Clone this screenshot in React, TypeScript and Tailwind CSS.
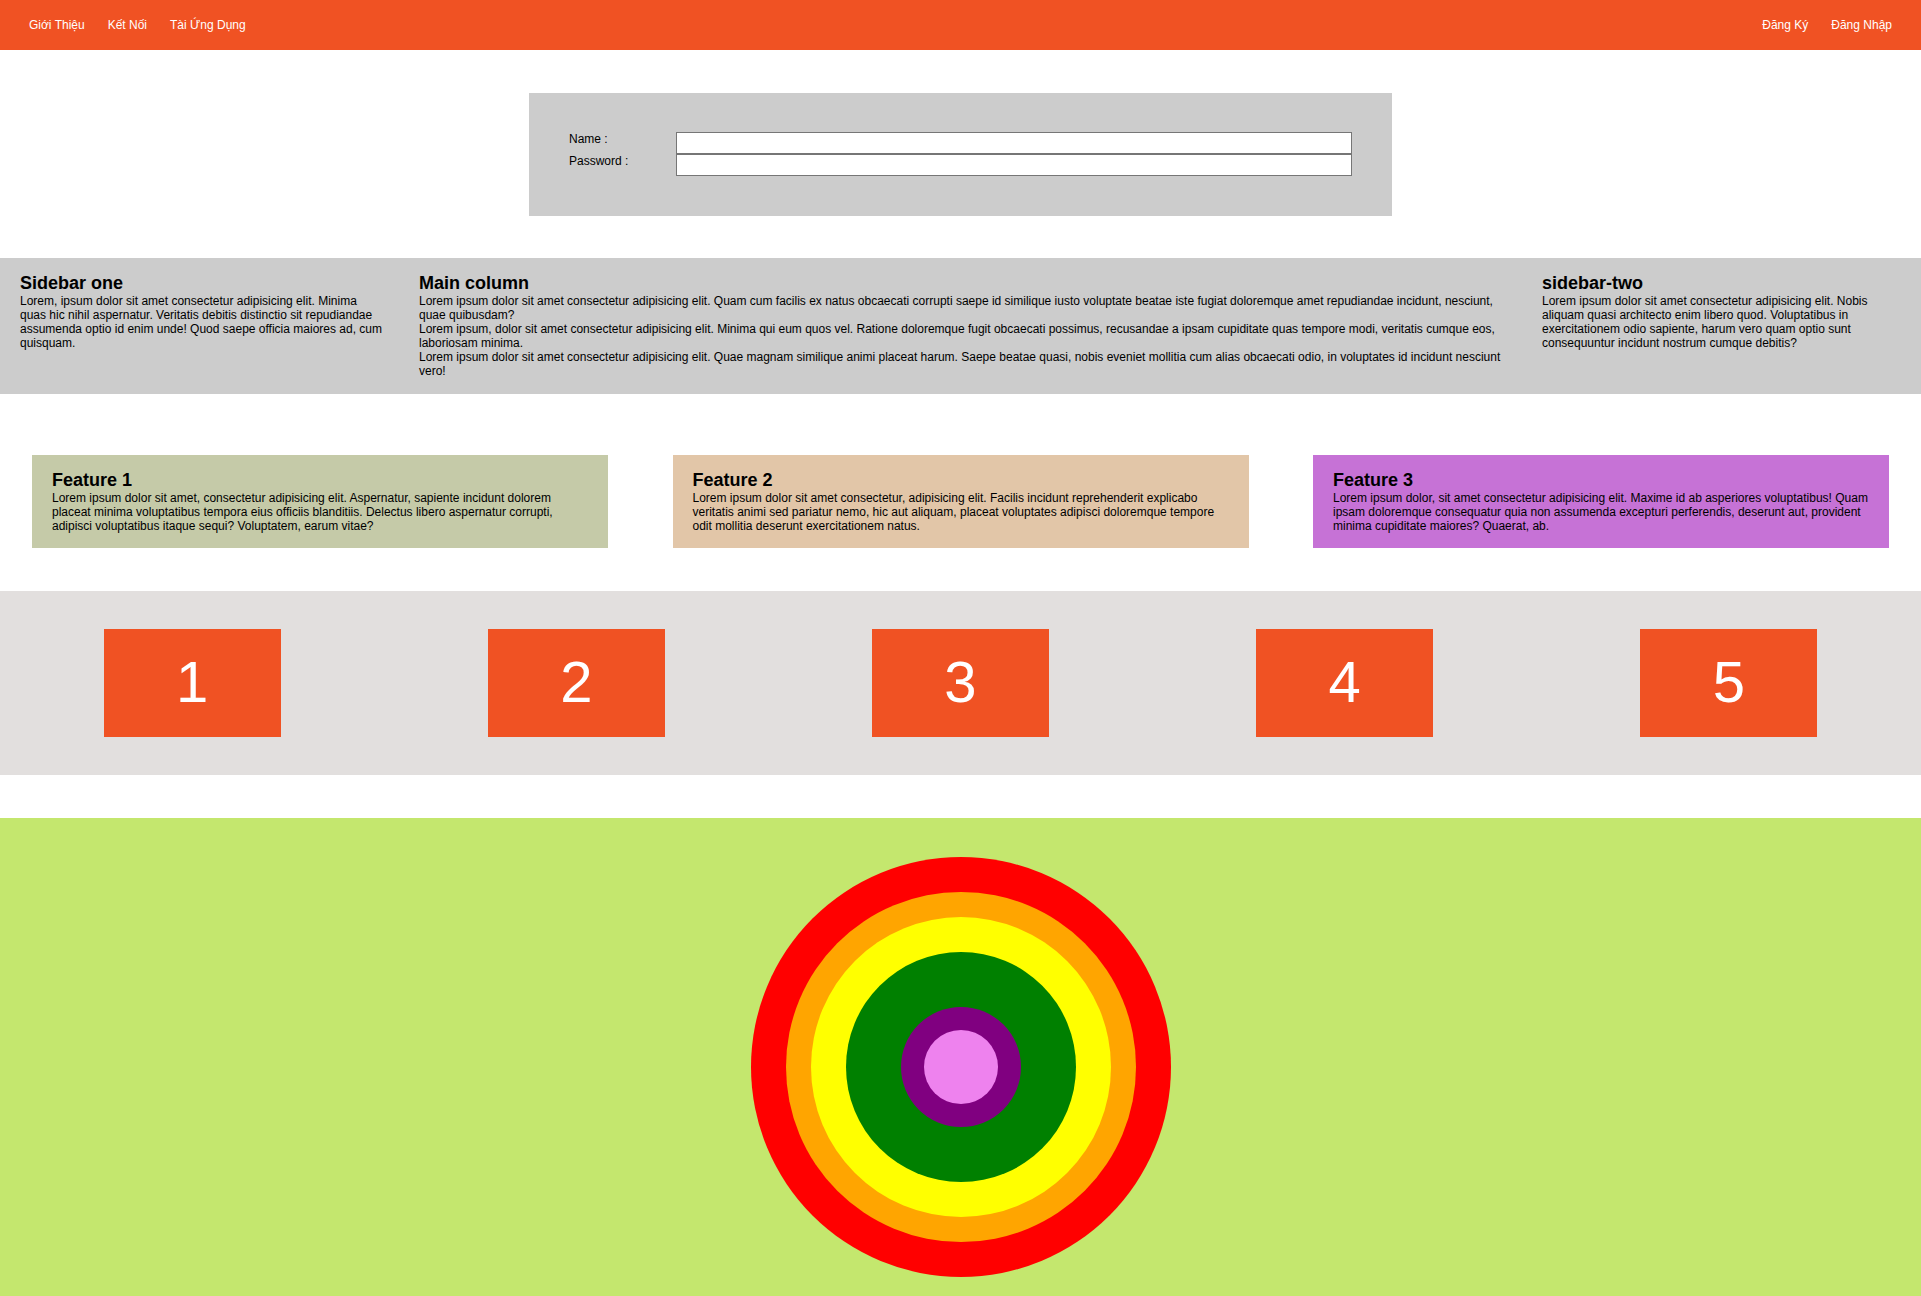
export default function App() {
  const navLeft = ["Giới Thiệu", "Kết Nối", "Tài Ứng Dụng"];
  const navRight = ["Đăng Ký", "Đăng Nhập"];

  const features = [
    {
      title: "Feature 1",
      bg: "bg-[#c5caa8]",
      text: "Lorem ipsum dolor sit amet, consectetur adipisicing elit. Aspernatur, sapiente incidunt dolorem placeat minima voluptatibus tempora eius officiis blanditiis. Delectus libero aspernatur corrupti, adipisci voluptatibus itaque sequi? Voluptatem, earum vitae?",
    },
    {
      title: "Feature 2",
      bg: "bg-[#e2c6a8]",
      text: "Lorem ipsum dolor sit amet consectetur, adipisicing elit. Facilis incidunt reprehenderit explicabo veritatis animi sed pariatur nemo, hic aut aliquam, placeat voluptates adipisci doloremque tempore odit mollitia deserunt exercitationem natus.",
    },
    {
      title: "Feature 3",
      bg: "bg-[#c672d6]",
      text: "Lorem ipsum dolor, sit amet consectetur adipisicing elit. Maxime id ab asperiores voluptatibus! Quam ipsam doloremque consequatur quia non assumenda excepturi perferendis, deserunt aut, provident minima cupiditate maiores? Quaerat, ab.",
    },
  ];

  return (
    <div className="min-h-screen bg-white font-['Liberation_Sans',Arial,sans-serif] leading-[normal] text-black">
      {/* Navbar */}
      <nav className="h-[50px] bg-[#f05223] flex items-center justify-between px-[29px] text-white text-[12px]">
        <ul className="flex gap-[23px]">
          {navLeft.map((item) => (
            <li key={item}>
              <a href="#">{item}</a>
            </li>
          ))}
        </ul>
        <ul className="flex gap-[23px]">
          {navRight.map((item) => (
            <li key={item}>
              <a href="#">{item}</a>
            </li>
          ))}
        </ul>
      </nav>

      {/* Login form */}
      <div className="w-[863px] mx-auto mt-[43px] mb-[42px] bg-[#cccccc] px-10 pt-[39px] pb-10">
        <div className="grid grid-cols-[107px_1fr] text-[12px]">
          <label className="leading-[14px]">Name :</label>
          <input type="text" className="h-[22px] bg-white border border-[#767676] outline-none" />
          <label className="leading-[14px]">Password :</label>
          <input type="password" className="h-[22px] bg-white border border-[#767676] outline-none" />
        </div>
      </div>

      {/* Three columns */}
      <section className="bg-[#cccccc] grid grid-cols-[362px_1086px_1fr] gap-[37px] pl-5 pr-5 pt-[15px] pb-[16px] text-[12px] leading-[normal]">
        <div>
          <h2 className="text-[18px] font-bold leading-[normal]">Sidebar one</h2>
          <p>
            Lorem, ipsum dolor sit amet consectetur adipisicing elit. Minima quas hic nihil aspernatur. Veritatis debitis distinctio sit repudiandae assumenda optio id enim unde! Quod saepe officia maiores ad, cum quisquam.
          </p>
        </div>
        <div>
          <h2 className="text-[18px] font-bold leading-[normal]">Main column</h2>
          <p>
            Lorem ipsum dolor sit amet consectetur adipisicing elit. Quam cum facilis ex natus obcaecati corrupti saepe id similique iusto voluptate beatae iste fugiat doloremque amet repudiandae incidunt, nesciunt, quae quibusdam?
          </p>
          <p>
            Lorem ipsum, dolor sit amet consectetur adipisicing elit. Minima qui eum quos vel. Ratione doloremque fugit obcaecati possimus, recusandae a ipsam cupiditate quas tempore modi, veritatis cumque eos, laboriosam minima.
          </p>
          <p>
            Lorem ipsum dolor sit amet consectetur adipisicing elit. Quae magnam similique animi placeat harum. Saepe beatae quasi, nobis eveniet mollitia cum alias obcaecati odio, in voluptates id incidunt nesciunt vero!
          </p>
        </div>
        <div>
          <h2 className="text-[18px] font-bold leading-[normal]">sidebar-two</h2>
          <p>
            Lorem ipsum dolor sit amet consectetur adipisicing elit. Nobis aliquam quasi architecto enim libero quod. Voluptatibus in exercitationem odio sapiente, harum vero quam optio sunt consequuntur incidunt nostrum cumque debitis?
          </p>
        </div>
      </section>

      {/* Features */}
      <section className="flex justify-between px-8 mt-[61px] mb-[43px]">
        {features.map((f) => (
          <div key={f.title} className={`w-[576px] ${f.bg} px-5 pt-[15px] pb-[15px] text-[12px] leading-[normal]`}>
            <h2 className="text-[18px] font-bold leading-[normal]">{f.title}</h2>
            <p>{f.text}</p>
          </div>
        ))}
      </section>

      {/* Numbered boxes */}
      <section className="bg-[#e2dfde] grid grid-cols-5 py-[38px]">
        {[1, 2, 3, 4, 5].map((n) => (
          <div key={n} className="w-[177px] h-[108px] mx-auto bg-[#f05223] flex items-center justify-center pb-[4px] text-white text-[58px] leading-[normal]">
            {n}
          </div>
        ))}
      </section>

      {/* Rainbow circles */}
      <section className="mt-[43px] bg-[#c4e76e] flex justify-center pt-[39px] pb-10">
        <div className="w-[420px] h-[420px] rounded-full bg-[#ff0000] flex items-center justify-center">
          <div className="w-[350px] h-[350px] rounded-full bg-[#ffa500] flex items-center justify-center">
            <div className="w-[300px] h-[300px] rounded-full bg-[#ffff00] flex items-center justify-center">
              <div className="w-[230px] h-[230px] rounded-full bg-[#008000] flex items-center justify-center">
                <div className="w-[120px] h-[120px] rounded-full bg-[#800080] flex items-center justify-center">
                  <div className="w-[74px] h-[74px] rounded-full bg-[#ee82ee]" />
                </div>
              </div>
            </div>
          </div>
        </div>
      </section>
    </div>
  );
}
